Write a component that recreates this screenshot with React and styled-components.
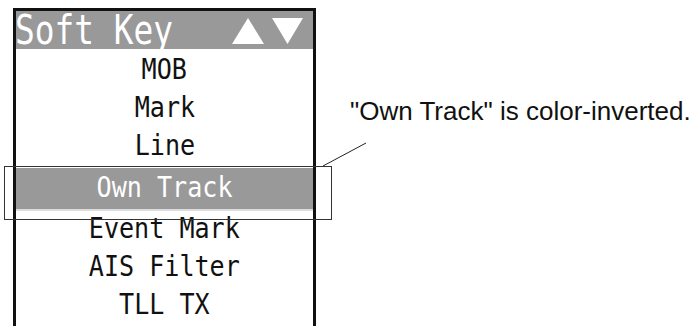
import React from "react";
import styled, { createGlobalStyle } from "styled-components";

const GlobalStyle = createGlobalStyle`
  html, body {
    margin: 0;
    padding: 0;
    background: #ffffff;
  }
  body {
    font-family: "Liberation Sans", Arial, sans-serif;
  }
`;

const items = ["MOB", "Mark", "Line", "Own Track", "Event Mark", "AIS Filter", "TLL TX"];
const selectedItem = "Own Track";

const SoftKeyPage = () => {
  return (
    <Page>
      <GlobalStyle />
      <Panel>
        <Header>
          <Title>Soft Key</Title>
          <Arrows>
            <svg width="32" height="26" viewBox="0 0 32 26">
              <polygon points="16,0 32,26 0,26" fill="#ffffff" />
            </svg>
            <svg width="31" height="26" viewBox="0 0 31 26">
              <polygon points="0,0 31,0 15.5,26" fill="#ffffff" />
            </svg>
          </Arrows>
        </Header>
        <List>
          {items.map((item) => (
            <Item key={item} selected={item === selectedItem}>
              <ItemLabel>{item}</ItemLabel>
            </Item>
          ))}
        </List>
      </Panel>

      <Note>"Own Track" is color-inverted.</Note>

      <Callout />
      <Leader width="50" height="30" viewBox="0 0 50 30">
        <line x1="1" y1="27" x2="44" y2="4" stroke="#222" strokeWidth="1" />
      </Leader>
    </Page>
  );
};

const Page = styled.div`
  position: relative;
  display: flex;
  align-items: flex-start;
  width: 696px;
  height: 326px;
  padding: 8px 0 0 13px;
  box-sizing: border-box;
  overflow: hidden;
`;

const Panel = styled.div`
  width: 303px;
  height: 330px;
  box-sizing: border-box;
  border: 3px solid #111;
  border-bottom: none;
  display: flex;
  flex-direction: column;
  flex-shrink: 0;
`;

const Header = styled.div`
  height: 38px;
  background: #999999;
  display: flex;
  align-items: center;
  padding: 0 10px 0 0;
`;

const Title = styled.span`
  display: inline-block;
  font-family: "DejaVu Sans Mono", monospace;
  font-size: 40px;
  line-height: 38px;
  color: #ffffff;
  white-space: nowrap;
  transform: scaleX(0.82);
  transform-origin: left center;
  margin-left: -1px;
`;

const Arrows = styled.div`
  margin-left: auto;
  margin-top: 2px;
  display: flex;
  gap: 8px;
`;

const List = styled.div`
  display: flex;
  flex-direction: column;
  padding-top: 1px;
`;

const Item = styled.div`
  height: ${(props) => (props.selected ? "41px" : "38px")};
  line-height: ${(props) => (props.selected ? "39px" : "38px")};
  margin-top: ${(props) => (props.selected ? "4px" : "0")};
  text-align: center;
  color: ${(props) => (props.selected ? "#ffffff" : "#111111")};
  background: ${(props) => (props.selected ? "#999999" : "transparent")};
  box-shadow: ${(props) => (props.selected ? "0 2px 0 #dddddd" : "none")};
`;

const ItemLabel = styled.span`
  display: inline-block;
  font-family: "DejaVu Sans Mono", monospace;
  font-size: 29px;
  white-space: nowrap;
  transform: scaleX(0.865);
`;

const Note = styled.div`
  margin-left: 34px;
  padding-top: 88px;
  font-family: "Liberation Sans", Arial, sans-serif;
  font-size: 26px;
  line-height: 30px;
  color: #111111;
  white-space: nowrap;
`;

const Callout = styled.div`
  position: absolute;
  left: 4px;
  top: 166px;
  width: 328px;
  height: 54px;
  box-sizing: border-box;
  border: 1px solid #333333;
`;

const Leader = styled.svg`
  position: absolute;
  left: 322px;
  top: 139px;
`;

export default SoftKeyPage;
